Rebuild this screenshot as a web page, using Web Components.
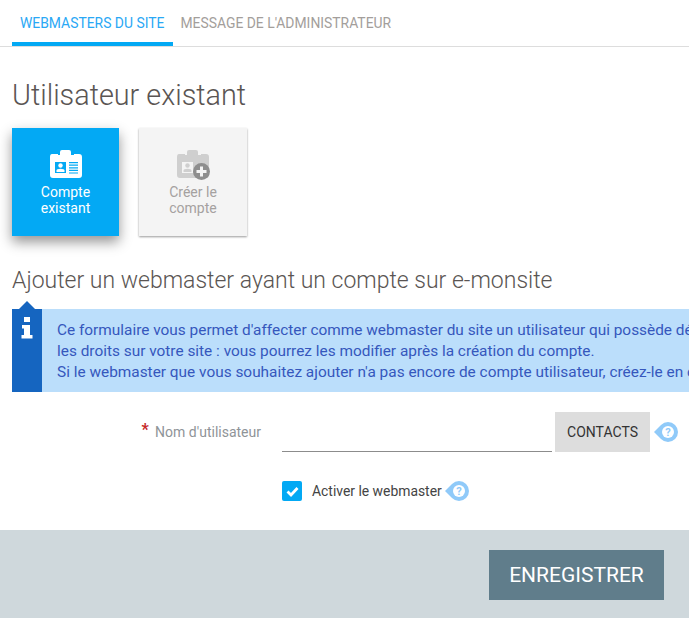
<!DOCTYPE html>
<html lang="fr">
<head>
<meta charset="utf-8">
<title>Webmasters</title>
<style>
html, body { margin: 0; padding: 0; height: 618px; overflow: hidden; background: #fff; font-family: Roboto, "Liberation Sans", sans-serif; }
</style>
</head>
<body>
<admin-page>
	<tab-bar></tab-bar>
	<h-title size="28.8" top="31" bottom="15">Utilisateur existant</h-title>
	<choice-cards></choice-cards>
	<h-title size="23" top="31" bottom="14">Ajouter un webmaster ayant un compte sur e-monsite</h-title>
	<info-box>
		<div>Ce formulaire vous permet d'affecter comme webmaster du site un utilisateur qui possède déjà un compte sur e-monsite.</div>
		<div>les droits sur votre site : vous pourrez les modifier après la création du compte.</div>
		<div>Si le webmaster que vous souhaitez ajouter n'a pas encore de compte utilisateur, créez-le en cliquant sur l'onglet.</div>
	</info-box>
	<user-form></user-form>
	<save-bar></save-bar>
</admin-page>

<script>
const HELP_ICON = `
	<svg width="24" height="20" viewBox="0 0 24 20">
		<path d="M0 10 L7 3 Q10 0 14 0 A10 10 0 0 1 14 20 Q10 20 7 17 Z" fill="#90caf9"/>
		<circle cx="14" cy="10" r="6" fill="#fff"/>
		<text x="14" y="13.800" text-anchor="middle" font-family="Roboto, sans-serif" font-size="11" font-weight="700" fill="#90caf9">?</text>
	</svg>`;

// same badge for both cards, only the colours change
const cardBody = (fill, cut) => `
	<path fill="${fill}" d="M3 4 H11 V2 Q11 0 13 0 H20 Q22 0 22 2 V4 H30 Q33 4 33 7 V25 Q33 28 30 28 H4 Q1 28 1 25 V7 Q1 4 3 4 Z"/>
	<path stroke="${cut}" stroke-width="1" d="M9 4.500 H11 M22 4.500 H25"/>
	<rect x="6" y="12" width="11" height="11" fill="${cut}"/>
	<circle cx="11.500" cy="15.500" r="2.200" fill="${fill}"/>
	<path fill="${fill}" d="M7.500 22 V20.500 Q7.500 18.800 11.500 18.800 Q15.500 18.800 15.500 20.500 V22 Z"/>`;

class AdminPage extends HTMLElement {
	constructor() {
		super();
		this.attachShadow({ mode: 'open' }).innerHTML = `
			<style>
				:host { display: block; width: 689px; height: 618px; overflow: hidden; color: #5f5a58; }
			</style>
			<slot></slot>`;
	}
}

class TabBar extends HTMLElement {
	constructor() {
		super();
		this.attachShadow({ mode: 'open' }).innerHTML = `
			<style>
				:host { display: flex; height: 46px; padding-left: 12px; border-bottom: 1px solid #ddd; font-size: 13.900px; }
				a { box-sizing: border-box; height: 46px; padding: 15px 8px 0; line-height: 17px; color: #a39e9b; white-space: nowrap; }
				a.on { color: #2aa8f5; border-bottom: 4px solid #03a9f4; padding-right: 9px; }
				a.on + a { padding-left: 7px; }
			</style>
			<a class="on">WEBMASTERS DU SITE</a>
			<a>MESSAGE DE L'ADMINISTRATEUR</a>`;
	}
}

class HTitle extends HTMLElement {
	constructor() {
		super();
		const size = this.getAttribute('size');
		this.attachShadow({ mode: 'open' }).innerHTML = `
			<style>
				:host {
					display: block;
					margin: ${this.getAttribute('top')}px 0 ${this.getAttribute('bottom')}px 12px;
					font-size: ${size}px;
					font-weight: 300;
					line-height: ${Math.round(size * 1.2)}px;
					color: #5a5553;
					white-space: nowrap;
				}
			</style>
			<slot></slot>`;
	}
}

class ChoiceCards extends HTMLElement {
	constructor() {
		super();
		this.attachShadow({ mode: 'open' }).innerHTML = `
			<style>
				:host { display: flex; gap: 20px; padding-left: 12px; }
				.card {
					box-sizing: border-box;
					width: 107px;
					height: 108px;
					padding-top: 22px;
					display: flex;
					flex-direction: column;
					align-items: center;
					font-size: 14px;
					line-height: 16px;
					text-align: center;
				}
				.card svg { display: block; margin-bottom: 6px; overflow: visible; }
				.on { background: #03a9f4; color: #fff; box-shadow: 0 6px 12px rgba(0,0,0,.42); }
				.off { width: 108px; background: #f4f4f4; color: #a5a1a0; box-shadow: 0 1px 2px rgba(0,0,0,.4); }
			</style>
			<div class="card on">
				<svg width="34" height="28" viewBox="0 0 34 28">
					${cardBody('#fff', '#03a9f4')}
					<path stroke="#03a9f4" stroke-width="1.200" d="M20 12.600 H29 M20 15.200 H29 M20 17.800 H29 M20 20.400 H29 M20 23 H29"/>
				</svg>
				<span>Compte<br>existant</span>
			</div>
			<div class="card off">
				<svg width="34" height="28" viewBox="0 0 34 28">
					${cardBody('#cfcfcf', '#f4f4f4')}
					<circle cx="25.500" cy="21.500" r="8.500" fill="#8e8e8e"/>
					<path stroke="#f4f4f4" stroke-width="3" d="M25.500 16.500 V26.500 M20.500 21.500 H30.500"/>
				</svg>
				<span>Créer le<br>compte</span>
			</div>`;
	}
}

class InfoBox extends HTMLElement {
	constructor() {
		super();
		this.attachShadow({ mode: 'open' }).innerHTML = `
			<style>
				:host { display: flex; position: relative; margin-left: 12px; height: 83px; background: #bbdefb; }
				.side { width: 30px; flex: none; background: #1565c0; display: flex; justify-content: center; padding-top: 8px; box-sizing: border-box; }
				.arrow { position: absolute; left: 7px; top: -8px; width: 0; height: 0; border: 8px solid transparent; border-top: 0; border-bottom-color: #1565c0; }
				.text { box-sizing: border-box; padding: 11px 0 0 15px; font-size: 15.400px; line-height: 21px; color: #3557bd; white-space: nowrap; overflow: hidden; }
			</style>
			<span class="arrow"></span>
			<div class="side">
				<svg width="12" height="22" viewBox="0 0 12 22">
					<path fill="#fff" d="M3 0 H9 V5 H3 Z M1 8 H9 V18 H11.500 V21.500 H0.500 V18 H3 V11.500 H1 Z"/>
				</svg>
			</div>
			<div class="text"><slot></slot></div>`;
	}
}

class UserForm extends HTMLElement {
	constructor() {
		super();
		this.attachShadow({ mode: 'open' }).innerHTML = `
			<style>
				:host { display: block; height: 138px; padding-top: 20px; box-sizing: border-box; font-size: 14px; }
				.row { display: flex; align-items: center; }
				.label { width: 282px; padding: 0 21px 2px 0; box-sizing: border-box; text-align: right; color: #8f9498; font-size: 14px; }
				.label b { color: #c62828; font-weight: 700; font-size: 16px; margin-right: 3px; position: relative; top: -2px; }
				.field { width: 270px; height: 40px; box-sizing: border-box; border-bottom: 1px solid #8c8c8c; }
				.btn { margin-left: 3px; width: 95px; height: 40px; background: #ddd; color: #333; text-align: center; line-height: 40px; }
				.help { display: flex; margin-left: 4px; }
				.check { margin: 29px 0 0 282px; color: #444; font-size: 13.900px; }
				.box { width: 20px; height: 20px; border-radius: 2px; background: #03a9f4; display: flex; align-items: center; justify-content: center; margin-right: 10px; }
				.check .help { margin-left: 3px; }
			</style>
			<div class="row">
				<div class="label"><b>*</b> Nom d'utilisateur</div>
				<div class="field"></div>
				<div class="btn">CONTACTS</div>
				<div class="help">${HELP_ICON}</div>
			</div>
			<div class="row check">
				<div class="box">
					<svg width="13" height="11" viewBox="0 0 13 11"><path d="M1.500 5.500 L5 9 L11.500 2" fill="none" stroke="#fff" stroke-width="2.800"/></svg>
				</div>
				<span>Activer le webmaster</span>
				<div class="help">${HELP_ICON}</div>
			</div>`;
	}
}

class SaveBar extends HTMLElement {
	constructor() {
		super();
		this.attachShadow({ mode: 'open' }).innerHTML = `
			<style>
				:host { display: flex; justify-content: flex-end; height: 88px; box-sizing: border-box; padding: 20px 25px 0 0; background: #cfd8dc; }
				div { width: 175px; height: 50px; background: #607d8b; color: #fff; font-size: 21px; line-height: 50px; text-align: center; }
			</style>
			<div>ENREGISTRER</div>`;
	}
}

customElements.define('admin-page', AdminPage);
customElements.define('tab-bar', TabBar);
customElements.define('h-title', HTitle);
customElements.define('choice-cards', ChoiceCards);
customElements.define('info-box', InfoBox);
customElements.define('user-form', UserForm);
customElements.define('save-bar', SaveBar);
</script>
</body>
</html>
